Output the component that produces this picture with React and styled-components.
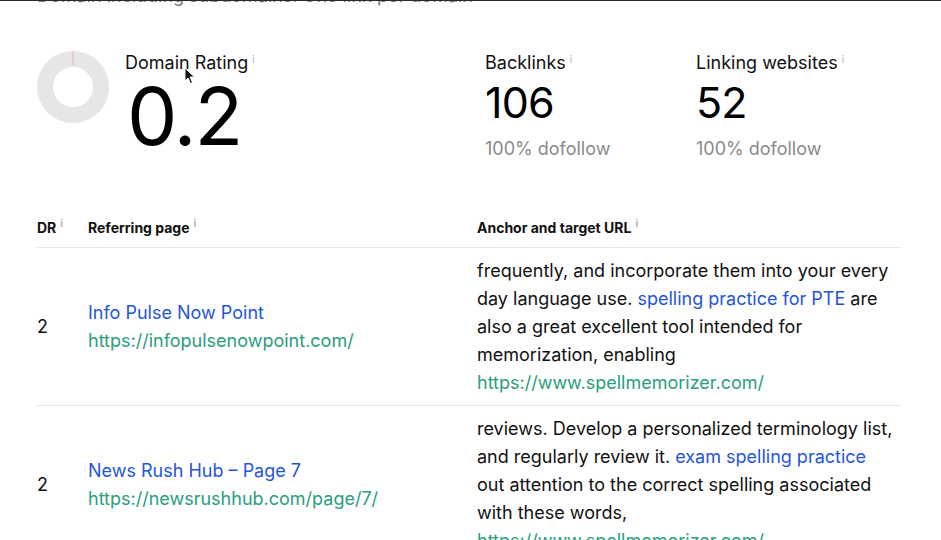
import React from 'react'
import styled, { createGlobalStyle } from 'styled-components'

const GlobalStyle = createGlobalStyle`
  html, body {
    margin: 0;
    padding: 0;
    background: #fff;
  }
  body {
    font-family: Inter, "Noto Sans", sans-serif;
    color: #111;
    overflow: hidden;
  }
`

const Page = styled.div`
  position: relative;
  width: 941px;
  height: 540px;
  overflow: hidden;
  border-top: 1px solid #2a2a2a;
  box-sizing: border-box;
`

const Content = styled.div`
  padding: 0 40px 0 37px;
`

const Lead = styled.p`
  margin: -15px 0 0;
  font-size: 18px;
  line-height: 20px;
  color: #7a7a7a;
`

const Stats = styled.div`
  display: flex;
  align-items: flex-start;
  margin-top: 45px;
`

const RatingBlock = styled.div`
  display: flex;
  align-items: flex-start;
  gap: 16px;
  width: 448px;
`

const Stat = styled.div`
  display: flex;
  flex-direction: column;
  width: ${p => p.$width || 'auto'};
  padding-top: 1px;
`

const Label = styled.div`
  font-size: 18px;
  line-height: 22px;
  color: #111;
`

const Info = styled.sup`
  font-size: 10px;
  color: #b0b0b0;
  margin-left: 4px;
  vertical-align: 6px;
  line-height: 0;
`

const BigValue = styled.div`
  font-size: 80px;
  line-height: 80px;
  letter-spacing: -2px;
  margin: 2px 0 0 2px;
  color: #000;
`

const Value = styled.div`
  font-size: 43px;
  line-height: 44px;
  letter-spacing: -0.8px;
  margin-top: 6px;
  color: #000;
`

const Sub = styled.div`
  font-size: 18px;
  line-height: 22px;
  color: #8a8a8a;
  margin-top: 14px;
`

const Table = styled.table`
  width: 864px;
  border-collapse: collapse;
  margin-top: 45px;
`

const Th = styled.th`
  text-align: left;
  font-size: 14px;
  font-weight: 700;
  height: 40px;
  padding: 2px 0 0;
  border-bottom: 1px solid #e6e6e6;
  width: ${p => p.$width || 'auto'};
`

const Td = styled.td`
  padding: 9px ${p => (p.$wide ? '6px' : '0')} 8px 0;
  vertical-align: middle;
  font-size: 18px;
  line-height: 28px;
  border-bottom: 1px solid #e6e6e6;
  color: #111;
`

const TitleLink = styled.div`
  color: #1f55dc;
`

const UrlLink = styled.div`
  color: #2a9e7e;
`

const Anchor = styled.span`
  color: #1f55dc;
`

const Cursor = styled.svg`
  position: absolute;
  left: 184px;
  top: 66px;
`

function Donut() {
  return (
    <svg width="72" height="72" viewBox="0 0 72 72">
      <circle cx="36" cy="36" r="28" fill="none" stroke="#e6e6e6" strokeWidth="16" />
      <line x1="36" y1="0" x2="36" y2="14" stroke="#f2a0a0" strokeWidth="0.8" />
    </svg>
  )
}

const rows = [
  {
    dr: 2,
    title: 'Info Pulse Now Point',
    url: 'https://infopulsenowpoint.com/',
    before: 'frequently, and incorporate them into your every day language use. ',
    anchor: 'spelling practice for PTE',
    after: ' are also a great excellent tool intended for memorization, enabling',
    target: 'https://www.spellmemorizer.com/',
  },
  {
    dr: 2,
    title: 'News Rush Hub – Page 7',
    url: 'https://newsrushhub.com/page/7/',
    before: 'reviews. Develop a personalized terminology list, and regularly review it. ',
    anchor: 'exam spelling practice',
    after: ' out attention to the correct spelling associated with these words,',
    target: 'https://www.spellmemorizer.com/',
  },
]

export default function App() {
  return (
    <Page>
      <GlobalStyle />
      <Content>
        <Lead>Domain including subdomains. One link per domain</Lead>
        <Stats>
          <RatingBlock>
            <Donut />
            <Stat>
              <Label>Domain Rating<Info>i</Info></Label>
              <BigValue>0.2</BigValue>
            </Stat>
          </RatingBlock>
          <Stat $width="211px">
            <Label>Backlinks<Info>i</Info></Label>
            <Value>106</Value>
            <Sub>100% dofollow</Sub>
          </Stat>
          <Stat>
            <Label>Linking websites<Info>i</Info></Label>
            <Value>52</Value>
            <Sub>100% dofollow</Sub>
          </Stat>
        </Stats>
        <Table>
          <thead>
            <tr>
              <Th $width="51px">DR<Info>i</Info></Th>
              <Th $width="389px">Referring page<Info>i</Info></Th>
              <Th>Anchor and target URL<Info>i</Info></Th>
            </tr>
          </thead>
          <tbody>
            {rows.map((r, i) => (
              <tr key={i}>
                <Td>{r.dr}</Td>
                <Td>
                  <TitleLink>{r.title}</TitleLink>
                  <UrlLink>{r.url}</UrlLink>
                </Td>
                <Td $wide>
                  {r.before}<Anchor>{r.anchor}</Anchor>{r.after}
                  <UrlLink>{r.target}</UrlLink>
                </Td>
              </tr>
            ))}
          </tbody>
        </Table>
      </Content>
      <Cursor width="12" height="18" viewBox="0 0 12 18">
        <path d="M1 1 L1 14 L4 11 L6.5 16.5 L8.5 15.5 L6 10 L10.5 10 Z" fill="#111" stroke="#fff" strokeWidth="1" />
      </Cursor>
    </Page>
  )
}
